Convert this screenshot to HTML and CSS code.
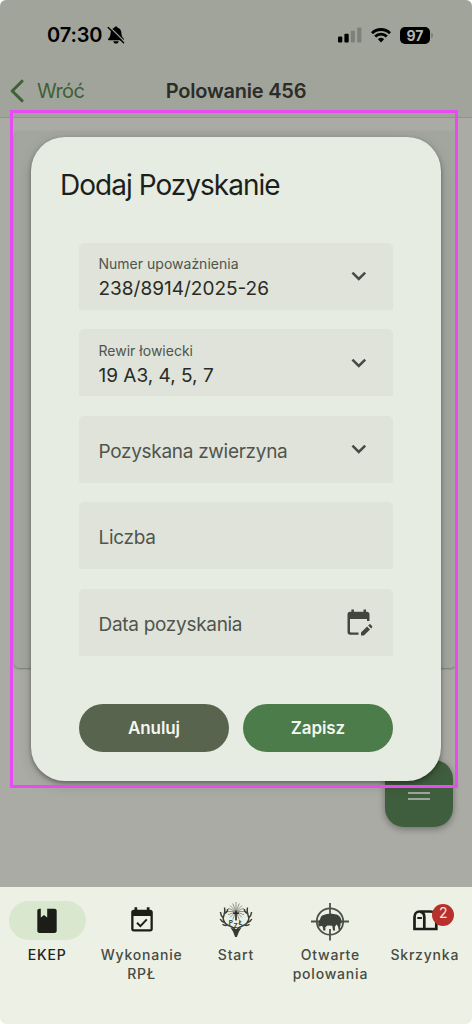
FILE: index.html
```html
<!DOCTYPE html>
<html lang="pl">
<head>
<meta charset="utf-8">
<meta name="viewport" content="width=device-width, initial-scale=1">
<title>Polowanie 456</title>
<link rel="stylesheet" href="styles.css">
</head>
<body>
<div class="screen">
  <header class="top">
    <div class="status">
      <span class="clock">07:30</span>
      <svg class="bell" width="18" height="18" viewBox="0 0 18 18">
        <path d="M9 .6c-.9 0-1.500.5-1.700 1.200C4.800 2.600 3.700 4.500 3.600 7 3.500 9.800 2.900 11.300 1.400 12.600c-.7.600-.4 1.700.6 1.700h14c1 0 1.300-1.100.6-1.700C15.100 11.300 14.500 9.800 14.400 7c-.1-2.500-1.200-4.400-3.700-5.200C10.500 1.100 9.900.6 9 .6z"/>
        <path d="M6.300 15.200h5.400c-.2 1.500-1.200 2.300-2.700 2.300s-2.500-.8-2.700-2.300z"/>
        <path class="bell-gap" d="M2.400.6 17.800 16"/>
        <path class="bell-slash" d="M1.200 1.600 16.600 16.800"/>
      </svg>
      <svg class="signal" width="24" height="16" viewBox="0 0 24 16">
        <rect x="0" y="9.500" width="4.300" height="6" rx="1"/>
        <rect x="6.400" y="6.800" width="4.300" height="8.700" rx="1"/>
        <rect class="dim" x="12.800" y="3.700" width="4.200" height="11.800" rx="1"/>
        <rect class="dim" x="19.200" y=".4" width="4.200" height="15.100" rx="1"/>
      </svg>
      <svg class="wifi" width="20" height="15" viewBox="0 0 20 15">
        <path d="M1 5.200a12.800 12.800 0 0 1 18 0M4.200 8.600a8.200 8.200 0 0 1 11.600 0"/>
        <path class="dot" d="M6.900 11.200a4.500 4.500 0 0 1 6.200 0L10 14.500z"/>
      </svg>
      <span class="battery">97</span><i class="battery-tip"></i>
    </div>
    <div class="titlebar">
      <a class="back"><svg width="14" height="24" viewBox="0 0 14 24"><path d="M12 2.200 2.200 12 12 21.600"/></svg><span>Wróć</span></a>
      <h1>Polowanie 456</h1>
    </div>
  </header>

  <main class="content">
    <section class="card"></section>
    <button class="fab"><i></i><i></i></button>
  </main>

  <nav class="tabs">
    <a class="tab active">
      <span class="pill"><svg width="20" height="26" viewBox="0 0 20 26"><path fill-rule="evenodd" d="M2.500.8h1.300v8.700l3.200-2.400 3.200 2.400V.8h7.300c1.300 0 2.200.9 2.200 2.100v19.800c0 1.300-.9 2.200-2.200 2.200h-15C1.200 24.900.3 24 .3 22.700V2.900C.3 1.700 1.200.8 2.500.8z"/></svg></span>
      <span class="label">EKEP</span>
    </a>
    <a class="tab">
      <span class="pill"><svg class="check" width="24" height="26" viewBox="0 0 24 26"><path fill-rule="evenodd" d="M4.500.3h2.700v2.400h9.600V.3h2.700v2.400h.8c1.500 0 2.500 1 2.500 2.500v16.900c0 1.500-1 2.500-2.500 2.500H3.700c-1.500 0-2.500-1-2.500-2.500V5.200c0-1.500 1-2.500 2.500-2.500h.8zM3.500 9v13.300h17V9z"/><path class="line" d="m7 15.700 3.400 3.400 6.400-6.700"/></svg></span>
      <span class="label">Wykonanie RPŁ</span>
    </a>
    <a class="tab">
      <span class="pill"><svg class="crest" width="34" height="36" viewBox="0 0 34 36">
        <path class="rays" d="M17 0v18M8 9.500h18M11 3.500l12 12M23 3.500l-12 12M13.700 1.500l6.600 16M20.300 1.500l-6.600 16M9 6.200l16 6.600M25 6.200 9 12.800"/>
        <path class="cross" d="M17 8.500v10M14.200 11.300h5.600"/>
        <path class="antler" d="M16 27.500c-1-2.300-4-2.600-7-4.300C4.500 20.700 3.200 17 5 13c1.200-2.800 1-5 .6-7.500M18 27.500c1-2.300 4-2.600 7-4.300 4.500-2.500 5.800-6.200 4-10.200-1.200-2.800-1-5-.6-7.500M4.400 16C2.500 14.500 1.600 12.500 1.400 10M5.500 20.500c-2-.6-3.500-1.800-4.300-3.500M29.600 16c1.900-1.500 2.800-3.500 3-6M28.500 20.500c2-.6 3.500-1.800 4.300-3.500M5.700 11.500c2-.8 2.900-2.500 3-4.500M28.300 11.500c-2-.8-2.900-2.500-3-4.500M8 23.300c-2 .4-3.500-.1-4.500-1M26 23.300c2 .4 3.500-.1 4.500-1"/>
        <path d="M11.500 25.500 15.500 27h3l4-1.500-2.600 4.200L17.900 35h-1.800l-2-5.300z"/>
        <text x="9.700" y="22.500">P</text><text x="14.500" y="25.500">Z</text><text x="19.500" y="22.500">Ł</text>
      </svg></span>
      <span class="label">Start</span>
    </a>
    <a class="tab">
      <span class="pill"><svg class="target" width="40" height="40" viewBox="0 0 40 40">
        <circle cx="20" cy="20.500" r="13.200"/>
        <path class="hair" d="M20 2v13M20 28v11.500M1 20.500h12M28 20.500h11"/>
        <path d="M8.300 24.500c-.2-2.500.5-4.700 2-6.700.2-2 1.400-3.300 3.200-3.800 3.500-1.400 7.500-1.400 11.300-.7 2.600.3 4.600 1.300 5.600 3.200.9 1.600 1.300 3.500 1.300 6.200l-1-.9c.1 1.600-.2 3.300-.8 4.800l1 2.200h-2.300c0-2.300-.7-4.100-2.200-5.300l-1.600 2.500.3 3.400h-2.100l-.7-4.700-4.800-.2-2.200 1.800.2 3.200h-2.200l-.5-3.700-1.500-1c-1.200.9-2.700.9-3-.3z"/>
      </svg></span>
      <span class="label">Otwarte polowania</span>
    </a>
    <a class="tab">
      <span class="pill"><svg class="mailbox" width="26" height="22" viewBox="0 0 26 22"><path class="box" d="M2.500 20V8.200c0-3.200 2-5.700 5-5.700h10.800c3.500 0 6 2.500 6 5.700V20zM12.300 20V8c0-3-2-5-4.300-5.300"/><path class="line" d="M5.300 9h4.600"/></svg><b class="badge">2</b></span>
      <span class="label">Skrzynka</span>
    </a>
  </nav>

  <form class="dialog">
    <h2>Dodaj Pozyskanie</h2>
    <div class="fields">
      <div class="field"><div class="text"><small>Numer upoważnienia</small><span class="value">238/8914/2025-26</span></div><svg class="chev" width="16" height="10" viewBox="0 0 16 10"><path d="m1.400 1.600 6.400 6.300 6.400-6.300"/></svg></div>
      <div class="field"><div class="text"><small>Rewir łowiecki</small><span class="value">19 A3, 4, 5, 7</span></div><svg class="chev" width="16" height="10" viewBox="0 0 16 10"><path d="m1.400 1.600 6.400 6.300 6.400-6.300"/></svg></div>
      <div class="field"><span class="hint">Pozyskana zwierzyna</span><svg class="chev" width="16" height="10" viewBox="0 0 16 10"><path d="m1.400 1.600 6.400 6.300 6.400-6.300"/></svg></div>
      <div class="field"><span class="hint">Liczba</span></div>
      <div class="field"><span class="hint">Data pozyskania</span><svg class="date" width="26" height="28" viewBox="0 0 26 28"><path fill-rule="evenodd" d="M4.400.5h2.500v2.200h9.600V.5H19v2.200h1c1.500 0 2.500 1 2.500 2.500v6.800H20V10H3v12.600c0 .5.300.8.800.8h7.700v2.400H3.200c-1.700 0-2.700-1-2.700-2.700V5.200c0-1.500 1-2.500 2.500-2.500h1.400z"/><path d="m14 23.600 6.100-6 2.900 2.900-6.100 6.100H14zM21.200 16.500l.9-.9c.5-.5 1-.5 1.500 0l1.400 1.400c.5.500.5 1 0 1.500l-.9.900z"/></svg></div>
    </div>
    <div class="actions">
      <button type="button" class="btn cancel">Anuluj</button>
      <button type="button" class="btn save">Zapisz</button>
    </div>
  </form>
  <div class="outline"></div>
</div>
</body>
</html>
```
FILE: styles.css
```css
* { box-sizing: border-box; }
body { margin: 0; background: #fff; font-family: Inter, "Liberation Sans", sans-serif; }
h1, h2 { margin: 0; }
button { border: 0; padding: 0; font: inherit; }
svg { display: block; flex: none; }

.screen {
  position: relative;
  width: 472px;
  height: 1024px;
  display: grid;
  grid-template-rows: 118px 769px 137px;
  border-radius: 6px;
  overflow: hidden;
}

/* status bar and page title */
.top { background: #a1a49a; border-bottom: 1px solid #92958c; }
.status { display: flex; align-items: center; height: 70px; padding-left: 47px; color: #000; }
.clock { font-size: 20px; font-weight: 600; letter-spacing: -.1px; width: 59.5px; }
.bell-gap { stroke: #a1a49a; stroke-width: 1.3; }
.bell-slash { stroke: #000; stroke-width: 1.4; stroke-linecap: round; }
.signal { margin-left: 213.5px; }
.signal .dim { fill: #7e8179; }
.wifi { margin-left: 9px; }
.wifi path { fill: none; stroke: #000; stroke-width: 2.8; }
.wifi .dot { fill: #000; stroke: none; }
.battery {
  margin-left: 9px; width: 30px; height: 17px; border-radius: 5px;
  background: #000; color: #b4b7ae; font-size: 14px; font-weight: 700;
  line-height: 17px; text-align: center;
}
.battery-tip { width: 2px; height: 5px; margin-left: 1px; border-radius: 0 2px 2px 0; background: #7e8179; }
.titlebar { display: grid; grid-template-columns: 1fr auto 1fr; align-items: center; height: 42px; padding: 0 11px 0 10px; }
.back { display: flex; align-items: center; gap: 13px; color: #3e6038; font-size: 20px; letter-spacing: -.6px; }
.back path { fill: none; stroke: #3d6237; stroke-width: 3; stroke-linecap: round; stroke-linejoin: round; }
.titlebar h1 { font-size: 20px; font-weight: 600; letter-spacing: -.2px; padding-left: 1px; color: #2b2d29; }

/* dimmed page */
.content { position: relative; background: #aaaba5; padding: 13px 16px 0 14px; }
.card { height: 537px; border-radius: 5px; background: #a3a69f; box-shadow: 0 1px 2px #777a73; }
.fab {
  position: absolute; right: 19px; top: 642px; width: 68px; height: 67px;
  display: flex; flex-direction: column; align-items: center; justify-content: center; gap: 4px;
  padding-top: 5px; border-radius: 19px; background: #3f5e3d; box-shadow: 0 2px 7px rgba(0, 0, 0, .35);
}
.fab i { width: 22px; height: 2px; background: #9da799; }

/* bottom navigation */
.tabs { display: grid; grid-template-columns: repeat(5, 1fr); background: #edf1e5; padding-top: 14px; }
.tab { display: flex; flex-direction: column; align-items: center; gap: 5px; color: #474b43; }
.pill { position: relative; display: flex; align-items: center; justify-content: center; width: 77px; height: 39px; border-radius: 20px; fill: #1b1e18; }
.active .pill { background: #d9e7ce; }
.active { color: #20231e; }
.label { width: 90px; font-size: 14px; font-weight: 500; line-height: 19px; letter-spacing: .8px; text-align: center; }
.line { fill: none; stroke: #1b1e18; stroke-width: 2; }
.check { margin-top: -1px; }
.mailbox { margin-top: -1px; }
.box { fill: none; stroke: #1b1e18; stroke-width: 2.7; }
.crest { fill: #353b33; margin-top: -2px; }
.crest .rays { stroke: #8f948a; stroke-width: 1; }
.crest .cross { stroke: #20251f; stroke-width: 1.5; }
.crest .antler { fill: none; stroke: #3c423a; stroke-width: 1.5; }
.crest text { font-size: 6.5px; font-weight: 700; }
.target { fill: #3c4239; }
.target circle { fill: none; stroke: #4c5249; stroke-width: 1.8; }
.target .hair { stroke: #4c5249; stroke-width: 1.8; }
.badge {
  position: absolute; left: 46px; top: 3px; width: 22px; height: 22px; border-radius: 50%;
  background: #b8302b; color: #f6e4e0; font-size: 14px; font-weight: 400; line-height: 18px; text-align: center;
}

/* dialog */
.dialog {
  position: absolute; left: 31px; top: 136.5px; width: 410px; height: 644.5px;
  padding: 30px 48px 0; border-radius: 34px; background: #e6ece1;
  box-shadow: 0 2px 4px rgba(0, 0, 0, .35), 0 4px 14px rgba(0, 0, 0, .15);
}
.dialog h2 { margin-left: -19px; font-size: 28px; font-weight: 400; line-height: 36px; letter-spacing: -.98px; color: #1c1f1b; }
.fields { display: grid; gap: 19.5px; margin-top: 40px; }
.field {
  display: flex; align-items: center; justify-content: space-between; height: 67px;
  padding: 0 20px 0 19.5px; border-radius: 5px 5px 1px 1px; background: #dfe3d9; color: #50544d;
}
.text { display: flex; flex-direction: column; gap: 3px; padding-top: 5px; }
.text small { font-size: 14px; line-height: 18px; letter-spacing: .01px; }
.value { font-size: 19px; line-height: 26px; color: #282b27; }
.hint { font-size: 19px; letter-spacing: -.3px; padding-top: 4px; }
.chev { margin-right: 6px; }
.chev path { fill: none; stroke: #464b43; stroke-width: 2.5; }
.date { fill: #42463e; margin-top: 1px; }
.actions { display: grid; grid-template-columns: 1fr 1fr; gap: 14px; margin-top: 48px; }
.btn { height: 48px; border-radius: 24px; color: #f4f7f1; font-size: 17px; font-weight: 600; letter-spacing: -.1px; }
.cancel { background: #58644d; }
.save { background: #4b7c4a; }

/* highlighted region */
.outline { position: absolute; left: 10px; top: 110px; width: 448px; height: 678px; border: 3px solid #e94bf2; pointer-events: none; }
```
